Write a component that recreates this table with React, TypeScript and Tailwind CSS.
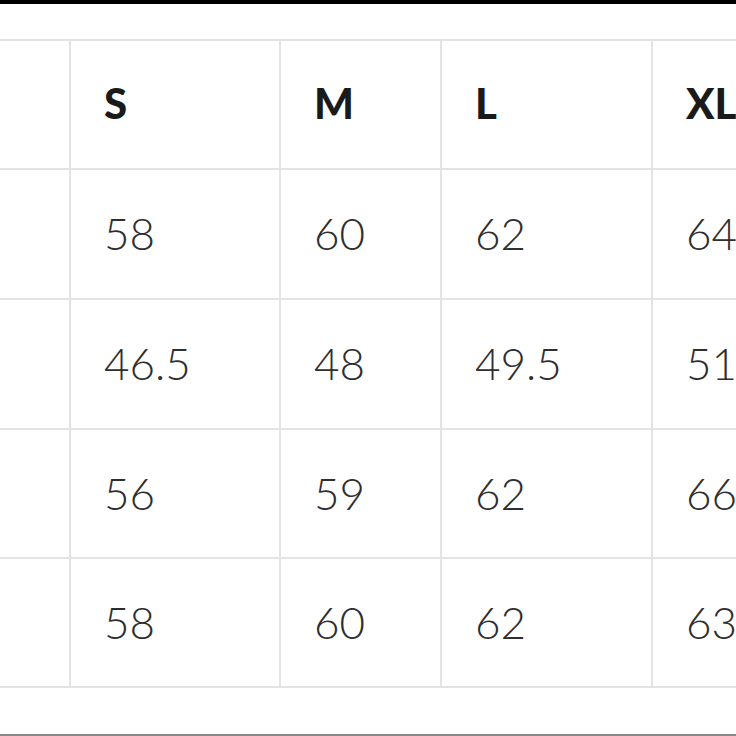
const header = ['', 'S', 'M', 'L', 'XL'];

const rows = [
  ['', '58', '60', '62', '64'],
  ['', '46.5', '48', '49.5', '51'],
  ['', '56', '59', '62', '66'],
  ['', '58', '60', '62', '63'],
];

export default function App() {
  return (
    <div
      className="flex h-[736px] w-[736px] flex-col overflow-hidden bg-white"
      style={{ fontFamily: 'Lato, "Open Sans", sans-serif' }}
    >
      <div className="h-[4px] shrink-0 bg-black" />
      <div className="h-[35px] shrink-0" />
      <div className="grid w-[900px] shrink-0 grid-cols-[69px_208px_159px_209px_240px] grid-rows-[127px_128px_128px_127px_127px] gap-[2px] border-y-2 border-[#e3e3e3] bg-[#e3e3e3]">
        {header.map((label, i) => (
          <div key={`h-${i}`} className="flex items-center bg-white pb-[2px] pl-[33px] text-[42px] font-black text-[#1a1a1a]">
            {label}
          </div>
        ))}
        {rows.map((row, r) =>
          row.map((value, c) => (
            <div key={`${r}-${c}`} className="flex items-center bg-white pb-[2px] pl-[33px] text-[44px] font-light text-[#2e2e2e]">
              {value}
            </div>
          )),
        )}
      </div>
      <div className="flex-1" />
      <div className="h-[2px] shrink-0 bg-[#8a8a8a]" />
    </div>
  );
}
